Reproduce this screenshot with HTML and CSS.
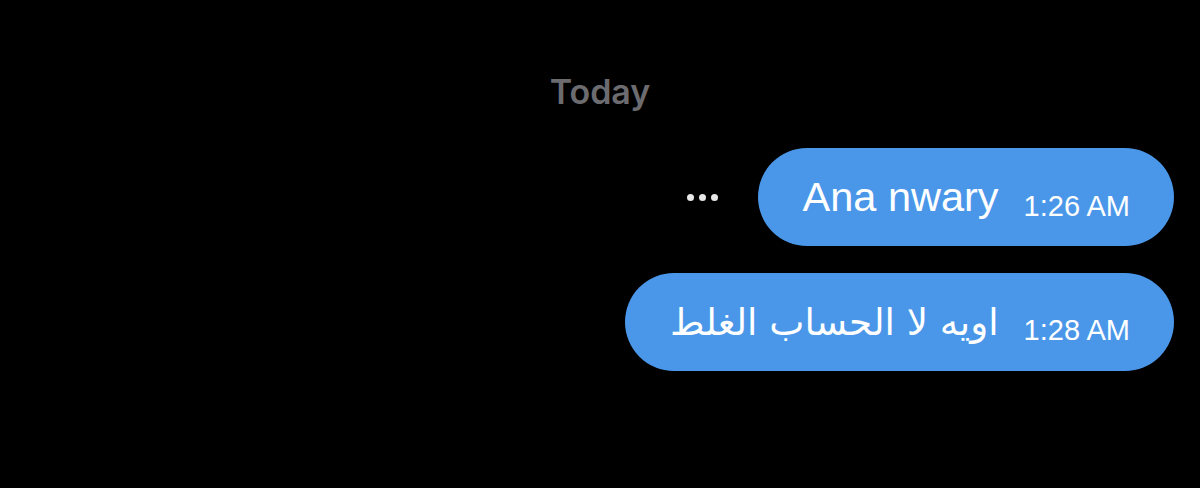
FILE: index.html
```html
<!DOCTYPE html>
<html lang="en">
<head>
  <meta charset="UTF-8" />
  <meta name="viewport" content="width=device-width,initial-scale=1" />
  <title>Chat</title>
  <link rel="stylesheet" href="styles.css">
</head>
<body>
  <main class="chat">
    <div class="day">Today</div>

    <div class="row">
      <button class="more" title="More">
        <span></span><span></span><span></span>
      </button>
      <div class="bubble">
        <span class="text">Ana nwary</span>
        <span class="time">1:26 AM</span>
      </div>
    </div>

    <div class="row">
      <div class="bubble">
        <span class="text" dir="rtl" lang="ar">اويه لا الحساب الغلط</span>
        <span class="time">1:28 AM</span>
      </div>
    </div>
  </main>
</body>
</html>
```

FILE: styles.css
```css
:root {
  --bg: #000000;
  --bubble: #4a97e9;
  --white: #ffffff;
  --muted: #6c6c70;
}
* { box-sizing: border-box; margin:0; padding:0; }
body {
  background: var(--bg);
  color: var(--white);
  font-family: 'Liberation Sans', Arial, sans-serif;
  height: 488px;
  overflow: hidden;
}
.chat {
  display:flex; flex-direction:column;
  padding: 72px 26px 0 0;
}
.day {
  align-self:center;
  margin-left: 26px;
  color: var(--muted);
  font-family: Inter, sans-serif;
  font-weight: 600;
  font-size: 34px;
  line-height: 40px;
  margin-bottom: 36px;
}
.row {
  display:flex; justify-content:flex-end; align-items:center;
  gap: 40px;
  margin-bottom: 27px;
}
.more {
  display:flex; gap:5px;
  background:none; border:none; cursor:pointer;
}
.more span {
  width:7px; height:7px; border-radius:50%;
  background: #e8e8e8;
}
.bubble {
  display:flex; align-items:baseline; gap:25px;
  background: var(--bubble);
  height: 98px;
  padding: 26px 44px 0 45px;
  border-radius: 49px;
}
.text {
  font-size: 41.5px;
  line-height: 46px;
}
.text[lang="ar"] {
  font-family: 'DejaVu Sans', sans-serif;
  font-size: 37.3px;
}
.time {
  font-size: 29px;
  position: relative; top: 5px;
}
```
